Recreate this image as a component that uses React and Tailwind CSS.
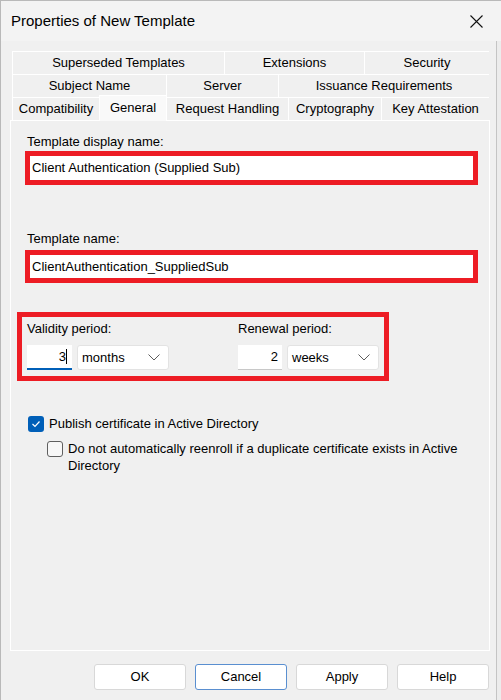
import React from 'react';

const font = { fontFamily: '"Liberation Sans", Arial, sans-serif' };

const Chevron = () => (
    <svg width="12" height="7" viewBox="0 0 12 7" className="text-[#5c5c5c]">
        <polyline points="0.5,0.5 6,6 11.5,0.5" fill="none" stroke="currentColor" strokeWidth="1" />
    </svg>
);

const Combo = ({ value }) => (
    <div className="w-[92px] h-[25px] bg-white border border-[#e3e3e3] rounded-[3px] flex items-center justify-between pl-[4px] pr-[8px]">
        <span className="text-[13px] text-black">{value}</span>
        <Chevron />
    </div>
);

const Tab = ({ label, w, active = false }) => (
    <div
        className={`${w} flex items-center justify-center text-[13px] text-black border-t border-l border-white
            ${active ? 'bg-[#f9f9f9] h-[26px] -mt-[2px] -mb-[1px] relative z-10 pb-[2px]' : 'bg-[#f0f0f0] h-[23px]'}`}
    >
        {label}
    </div>
);

const RedBox = ({ children, className = '' }) => (
    <div className={`border-[5px] border-[#ed1c24] ${className}`}>{children}</div>
);

export default function App() {
    return (
        <div style={font} className="w-[501px] h-[700px] bg-[#f0f0f0] flex flex-col border-l border-t border-[#b9b9b9] relative overflow-hidden">
            {/* title bar */}
            <div className="h-[40px] bg-[#f3f3f3] flex items-center justify-between pl-[10px] pr-[18px]">
                <span className="text-[15px] text-black">Properties of New Template</span>
                <svg width="13" height="13" viewBox="0 0 13 13">
                    <path d="M0.5 0.5 L12.5 12.5 M12.5 0.5 L0.5 12.5" stroke="#111" strokeWidth="1.1" />
                </svg>
            </div>

            {/* tab strip */}
            <div className="mt-[10px] ml-[11px] flex flex-col w-[477px]">
                <div className="flex">
                    <Tab label="Superseded Templates" w="w-[212px]" />
                    <Tab label="Extensions" w="w-[140px]" />
                    <Tab label="Security" w="w-[125px]" />
                </div>
                <div className="flex">
                    <Tab label="Subject Name" w="w-[154px]" />
                    <Tab label="Server" w="w-[112px]" />
                    <Tab label="Issuance Requirements" w="w-[211px]" />
                </div>
                <div className="flex items-start">
                    <Tab label="Compatibility" w="w-[87px]" />
                    <Tab label="General" w="w-[67px]" active />
                    <Tab label="Request Handling" w="w-[122px]" />
                    <Tab label="Cryptography" w="w-[93px]" />
                    <Tab label="Key Attestation" w="w-[108px]" />
                </div>
            </div>

            {/* panel */}
            <div className="ml-[9px] w-[480px] h-[531px] border border-white bg-[#f0f0f0] flex flex-col">
                <div className="ml-[16px] mt-[13px] text-[13px] leading-[16px] text-black">Template display name:</div>
                <RedBox className="ml-[14px] mt-[1px] w-[453px]">
                    <div className="h-[24px] bg-white flex items-center pl-[2px] text-[13px] text-black">
                        Client Authentication (Supplied Sub)
                    </div>
                </RedBox>

                <div className="ml-[16px] mt-[46px] text-[13px] leading-[16px] text-black">Template name:</div>
                <RedBox className="ml-[14px] mt-[3px] w-[453px]">
                    <div className="h-[23px] bg-white flex items-center pl-[2px] text-[13px] text-black">
                        ClientAuthentication_SuppliedSub
                    </div>
                </RedBox>

                <RedBox className="ml-[6px] mt-[29px] w-[372px] h-[69px] pl-[5px] pt-[4px] flex">
                    <div className="w-[211px] flex flex-col">
                        <div className="text-[13px] leading-[16px] text-black">Validity period:</div>
                        <div className="mt-[8px] flex gap-[5px]">
                            <div className="w-[45px] h-[25px] bg-white border-b-2 border-[#005fb8] flex items-center justify-end pr-[5px] text-[13px] text-black">
                                3<span className="w-px h-[15px] bg-black"></span>
                            </div>
                            <Combo value="months" />
                        </div>
                    </div>
                    <div className="flex flex-col">
                        <div className="text-[13px] leading-[16px] text-black">Renewal period:</div>
                        <div className="mt-[8px] flex gap-[5px]">
                            <div className="w-[44px] h-[25px] bg-white border-b border-[#c8c8c8] flex items-center justify-end pr-[4px] text-[13px] text-black">
                                2
                            </div>
                            <Combo value="weeks" />
                        </div>
                    </div>
                </RedBox>

                <div className="ml-[17px] mt-[33px] flex items-center gap-[5px]">
                    <div className="w-[16px] h-[16px] rounded-[3px] bg-[#005fb8] flex items-center justify-center">
                        <svg width="10" height="8" viewBox="0 0 10 8">
                            <polyline points="1.5,4 4,6.5 8.5,1.5" fill="none" stroke="white" strokeWidth="1.2" />
                        </svg>
                    </div>
                    <span className="text-[13px] text-black">Publish certificate in Active Directory</span>
                </div>

                <div className="ml-[36px] mt-[6px] flex items-start gap-[5px]">
                    <div className="mt-[1px] w-[16px] h-[16px] shrink-0 rounded-[3px] border border-[#5f5f5f] bg-[#f7f7f7]"></div>
                    <span className="text-[13px] leading-[17px] text-black w-[400px]">
                        Do not automatically reenroll if a duplicate certificate exists in Active Directory
                    </span>
                </div>
            </div>

            {/* buttons */}
            <div className="mt-[13px] ml-[93px] flex gap-[9px]">
                {['OK', 'Cancel', 'Apply', 'Help'].map((b) => (
                    <div
                        key={b}
                        className={`w-[92px] h-[26px] bg-white rounded-[3px] flex items-center justify-center text-[13px] text-black border
                            ${b === 'Cancel' ? 'border-[#5a8fd0]' : 'border-[#d8d8d8]'}`}
                    >
                        {b}
                    </div>
                ))}
            </div>

            {/* window behind, right edge */}
            <div className="absolute top-[40px] right-0 w-[5px] h-[660px] border-l border-[#c4c4c4] bg-[#ececec]"></div>
        </div>
    );
}
